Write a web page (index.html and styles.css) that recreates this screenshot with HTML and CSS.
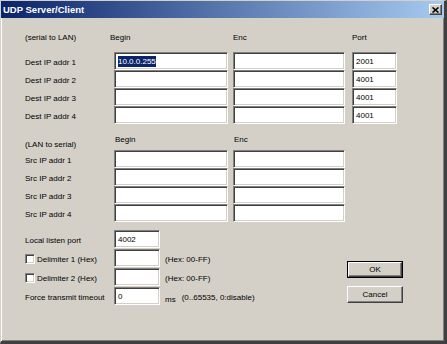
FILE: index.html
```html
<!DOCTYPE html>
<html lang="en">
<head>
    <meta charset="UTF-8">
    <title>UDP Server/Client</title>
    <link rel="stylesheet" href="styles.css">
</head>
<body>
    <div class="window">
        <div class="titlebar">
            <span class="title">UDP Server/Client</span>
            <span class="close">
                <svg width="7" height="6" viewBox="0 0 7 6"><path d="M0.5 0.5L6.5 5.5M6.5 0.5L0.5 5.5" stroke="#000" stroke-width="1.6"/></svg>
            </span>
        </div>
        <div class="body">
            <!-- serial to LAN -->
            <div class="grid grid-dest">
                <div class="head">(serial to LAN)</div>
                <div class="head head-begin">Begin</div>
                <div class="head">Enc</div>
                <div class="head">Port</div>

                <div class="label">Dest IP addr 1</div>
                <div class="field f-begin"><span class="sel">10.0.0.255</span></div>
                <div class="field f-enc"></div>
                <div class="field f-port">2001</div>

                <div class="label">Dest IP addr 2</div>
                <div class="field f-begin"></div>
                <div class="field f-enc"></div>
                <div class="field f-port">4001</div>

                <div class="label">Dest IP addr 3</div>
                <div class="field f-begin"></div>
                <div class="field f-enc"></div>
                <div class="field f-port">4001</div>

                <div class="label">Dest IP addr 4</div>
                <div class="field f-begin"></div>
                <div class="field f-enc"></div>
                <div class="field f-port">4001</div>
            </div>
            <!-- LAN to serial -->
            <div class="grid grid-src">
                <div class="head head-group">(LAN to serial)</div>
                <div class="head head-col">Begin</div>
                <div class="head head-col">Enc</div>

                <div class="label">Src IP addr 1</div>
                <div class="field f-begin"></div>
                <div class="field f-enc"></div>

                <div class="label">Src IP addr 2</div>
                <div class="field f-begin"></div>
                <div class="field f-enc"></div>

                <div class="label">Src IP addr 3</div>
                <div class="field f-begin"></div>
                <div class="field f-enc"></div>

                <div class="label">Src IP addr 4</div>
                <div class="field f-begin"></div>
                <div class="field f-enc"></div>
            </div>
            <!-- options + buttons -->
            <div class="bottom">
                <div class="opts">
                    <div class="opt">
                        <span class="label opt-label">Local listen port</span>
                        <span class="field f-small">4002</span>
                    </div>
                    <div class="opt">
                        <span class="check"></span>
                        <span class="label check-label">Delimiter 1 (Hex)</span>
                        <span class="field f-small"></span>
                        <span class="hint">(Hex: 00-FF)</span>
                    </div>
                    <div class="opt">
                        <span class="check"></span>
                        <span class="label check-label">Delimiter 2 (Hex)</span>
                        <span class="field f-small"></span>
                        <span class="hint">(Hex: 00-FF)</span>
                    </div>
                    <div class="opt">
                        <span class="label opt-label">Force transmit timeout</span>
                        <span class="field f-small">0</span>
                        <span class="hint hint-ms">ms</span>
                        <span class="hint hint-range">(0..65535, 0:disable)</span>
                    </div>
                </div>
                <div class="buttons">
                    <div class="btn btn-default"><span class="btn-in">OK</span></div>
                    <div class="btn"><span class="btn-in">Cancel</span></div>
                </div>
            </div>
        </div>
    </div>
</body>
</html>
```

FILE: styles.css
```css
*{margin:0;padding:0;box-sizing:border-box;}
body{
    width: 447px;height: 344px;overflow: hidden;
    background: #d4d0c8;
    font-family: "Liberation Sans", Arial, sans-serif;
    font-size: 8px;color: #000;
}
/* window frame */
.window{
    width: 447px;height: 344px;
    background: #d4d0c8;
    border-top: 1px solid #d4d0c8;
    border-left: 1px solid #d4d0c8;
    border-right: 3px solid #404040;
    border-bottom: 3px solid #404040;
    box-shadow: inset 1px 1px #fff, inset -1px -1px #808080;
}
.titlebar{
    height: 17px;
    display: flex;align-items: center;justify-content: space-between;
    padding: 0 2px 0 2px;
    background: linear-gradient(to right, #0a246a, #a6caf0);
}
.title{
    color: #fff;font-weight: bold;font-size: 9.5px;
}
.close{
    width: 13px;height: 11px;
    display: flex;align-items: center;justify-content: center;
    background: #d4d0c8;
    border: 1px solid;border-color: #fff #404040 #404040 #fff;
    box-shadow: inset -1px -1px #808080;
}
/* content */
.body{
    padding: 14px 0 0 24px;
}
.grid{
    display: grid;
    grid-template-columns: 89px 119px 119px 45px;
}
.grid-dest{
    grid-template-rows: 20px repeat(4, 18px);
}
.grid-src{
    grid-template-columns: 89px 119px 119px;
    grid-template-rows: 26px repeat(4, 18px);
}
.head{
    line-height: 12px;white-space: nowrap;
}
.head-begin{
    margin-left: -4px;
}
.head-group{
    padding-top: 15px;
}
.head-col{
    padding-top: 10px;margin-left: 1px;
}
.label{
    display: flex;align-items: center;
    padding-top: 2px;white-space: nowrap;
}
.field{
    display: flex;align-items: center;
    height: 18px;padding: 0 0 0 3px;
    background: #fff;white-space: nowrap;
    border: 1px solid;border-color: #808080 #fff #fff #808080;
    box-shadow: inset 1px 1px #404040, inset -1px -1px #d4d0c8;
}
.f-begin{width: 114px;}
.f-enc{width: 112px;}
.f-port{width: 45px;}
.f-small{width: 46px;}
.sel{
    background: #0a246a;color: #fff;
    line-height: 11px;
}
/* options */
.bottom{
    display: flex;
    padding-top: 8px;
}
.opts{
    width: 322px;
    display: flex;flex-direction: column;gap: 1px;
}
.opt{
    display: flex;align-items: center;
    height: 18px;
}
.opt-label{
    width: 89px;height: 18px;
}
.check{
    width: 10px;height: 10px;margin-right: 2px;margin-top: 2px;
    background: #fff;
    border: 1px solid;border-color: #808080 #fff #fff #808080;
    box-shadow: inset 1px 1px #404040, inset -1px -1px #d4d0c8;
}
.check-label{
    width: 77px;height: 18px;
}
.hint{
    margin-left: 5px;padding-top: 2px;white-space: nowrap;
}
.hint-ms{
    padding-top: 6px;
}
.hint-range{
    margin-left: 6px;
}
/* buttons */
.buttons{
    display: flex;flex-direction: column;gap: 8px;
    padding-top: 31px;
}
.btn{
    width: 56px;height: 17px;
    display: flex;
    background: #d4d0c8;
    border: 1px solid;border-color: #fff #404040 #404040 #fff;
    box-shadow: inset -1px -1px #808080;
}
.btn-in{
    flex: 1;display: flex;align-items: center;justify-content: center;
}
.btn-default{
    border: 1px solid #000;box-shadow: none;
}
.btn-default .btn-in{
    border: 1px solid;border-color: #fff #404040 #404040 #fff;
    box-shadow: inset -1px -1px #808080;
}
```
